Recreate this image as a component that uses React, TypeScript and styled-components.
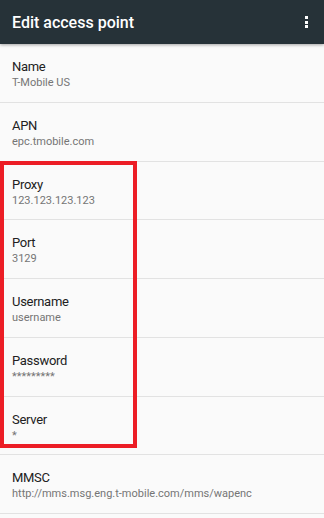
import React from 'react';
import styled, { createGlobalStyle } from 'styled-components';

const GlobalStyle = createGlobalStyle`
  html, body {
    margin: 0;
    padding: 0;
    background: #fafafa;
  }
  body {
    font-family: Roboto, "Liberation Sans", Arial, sans-serif;
  }
`;

interface Field {
  label: string;
  value: string;
}

const fields: Field[] = [
  { label: 'Name', value: 'T-Mobile US' },
  { label: 'APN', value: 'epc.tmobile.com' },
  { label: 'Proxy', value: '123.123.123.123' },
  { label: 'Port', value: '3129' },
  { label: 'Username', value: 'username' },
  { label: 'Password', value: '*********' },
  { label: 'Server', value: '*' },
  { label: 'MMSC', value: 'http://mms.msg.eng.t-mobile.com/mms/wapenc' },
];

const Screen = styled.div`
  position: relative;
  width: 324px;
  height: 518px;
  overflow: hidden;
  background: #fafafa;
`;

const Toolbar = styled.header`
  position: relative;
  z-index: 1;
  height: 44px;
  display: flex;
  align-items: center;
  justify-content: space-between;
  padding: 0 12px;
  background: #263238;
  box-shadow: 0 1px 3px rgba(0, 0, 0, 0.35);
`;

const Title = styled.h1`
  margin: 0;
  color: #ffffff;
  font-size: 16px;
  font-weight: 500;
`;

const MenuButton = styled.div`
  display: flex;
  flex-direction: column;
  gap: 1.5px;
  padding: 0 4px;
`;

const Dot = styled.span`
  width: 3px;
  height: 3px;
  background: #ffffff;
`;

const List = styled.div`
  display: flex;
  flex-direction: column;
`;

const Row = styled.div`
  height: 58.75px;
  box-sizing: border-box;
  border-bottom: 1px solid #e2e2e2;
  padding: 14px 12px 0;
`;

const Label = styled.div`
  color: #212121;
  font-size: 13px;
  line-height: 18px;
  letter-spacing: -0.3px;
`;

const Value = styled.div`
  color: #757575;
  font-size: 11px;
  line-height: 14px;
`;

const Highlight = styled.div`
  position: absolute;
  left: 0;
  top: 161px;
  width: 137px;
  height: 287px;
  box-sizing: border-box;
  border: 4px solid #ec1d25;
  pointer-events: none;
`;

export default function App() {
  return (
    <>
      <GlobalStyle />
      <Screen>
        <Toolbar>
          <Title>Edit access point</Title>
          <MenuButton>
            <Dot />
            <Dot />
            <Dot />
          </MenuButton>
        </Toolbar>
        <List>
          {fields.map(f => (
            <Row key={f.label}>
              <Label>{f.label}</Label>
              <Value>{f.value}</Value>
            </Row>
          ))}
        </List>
        <Highlight />
      </Screen>
    </>
  );
}
